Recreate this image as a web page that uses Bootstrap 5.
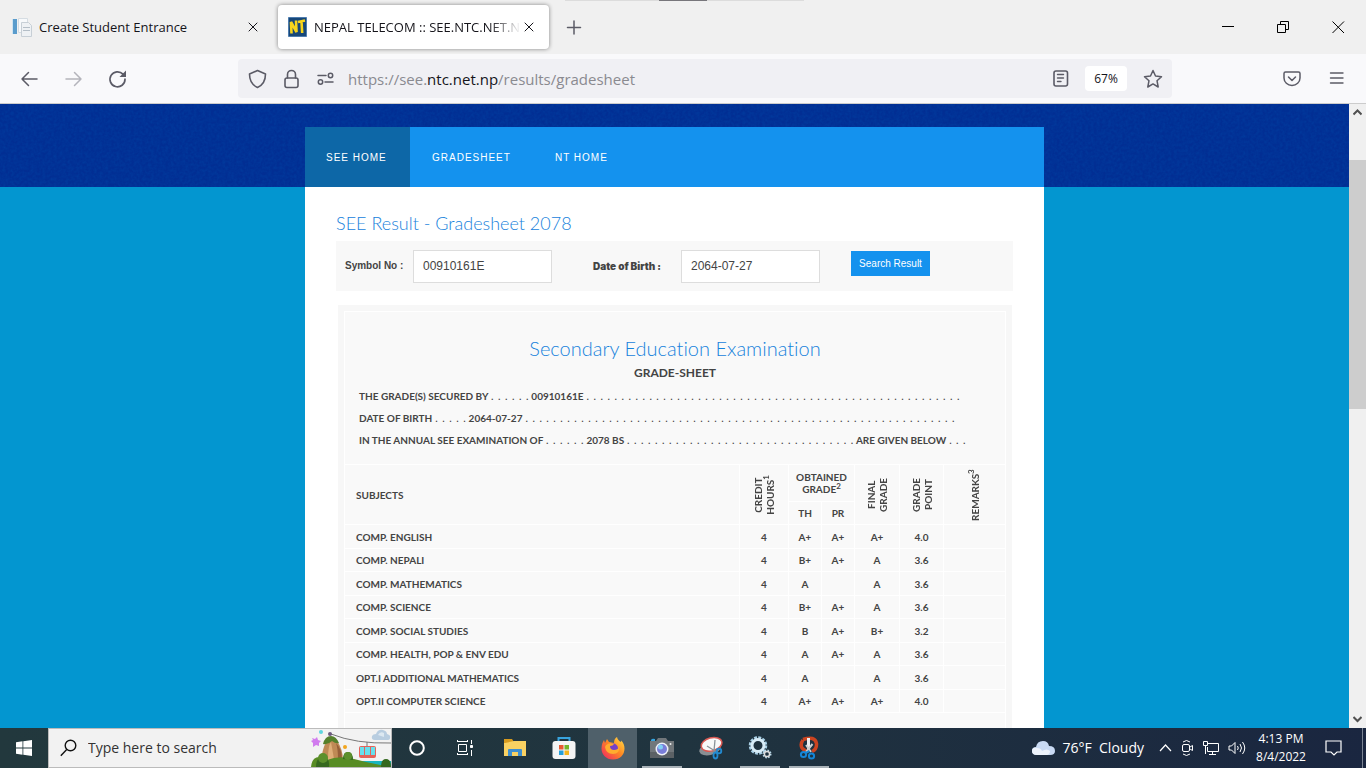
<!DOCTYPE html>
<html lang="en">
<head>
<meta charset="utf-8">
<meta name="viewport" content="width=device-width, initial-scale=1">
<title>NEPAL TELECOM :: SEE.NTC.NET.NP</title>
<link href="https://cdn.jsdelivr.net/npm/bootstrap@5.3.0/dist/css/bootstrap.min.css" rel="stylesheet">
<style>
  body { font-family: "Open Sans", "Noto Sans", sans-serif; font-size: 14px; line-height: 20px; color: #15141a; }
  button { border: 0; background: none; padding: 0; color: inherit; }
  svg { display: block; flex: none; }
  .ln { fill: none; stroke: currentColor; stroke-linecap: round; stroke-linejoin: round; }

  /* browser window */
  .tabstrip { height: 54px; background: #f0f0f0; }
  .pulltab { top: 0; left: 565px; width: 239px; height: 1px; background: #dcdcdc; }
  .pulltab::after { content: ""; position: absolute; left: 94px; width: 48px; height: 1px; background: #77767b; }
  .tab { height: 44px; border-radius: 4px; }
  .tab-one { width: 266px; padding: 0 8px 0 12px; gap: 7px; }
  .tab-two { width: 271px; margin-left: 12px; padding: 0 15px 0 10px; background: #fff; box-shadow: 0 0 4px rgba(0,0,0,.45); gap: 7px; }
  .tab-two button { margin-left: -4px; }
  .tab-label { font-size: 13px; }
  .tab-two .tab-label { -webkit-mask-image: linear-gradient(90deg, #000 85%, transparent); mask-image: linear-gradient(90deg, #000 85%, transparent); }
  .winctl { width: 55px; }
  .toolbar { height: 50px; background: #f9f9fb; border-bottom: 1px solid #ccc; color: #5b5b66; }
  .navbtns { width: 238px; padding-left: 20px; gap: 24px; }
  .urlbar { height: 39px; background: #f0f0f4; border-radius: 4px; padding: 0 9px 0 10px; }
  .address { font-size: 15px; color: #8a8a90; border: 0; background: none; }
  .address b { font-weight: 400; color: #15141a; }
  .zoomlvl { width: 42px; height: 25px; background: #fff; border-radius: 4px; font-size: 12px; color: #15141a; }
  .menus { width: 194px; padding-right: 21px; gap: 28px; }

  /* web page */
  .viewport { background: #0396d0; }
  .hero { height: 83px; background: #022e93; }
  .hero svg { inset: 0; opacity: .15; }
  .sitewrap { width: 739px; max-width: 100%; margin-top: -60px; background: #fff; }
  .sitenav { background: #1492ee; }
  .sitenav a { height: 60px; padding: 1px 22px 0; color: #fff; text-decoration: none; font: 10px/60px "Liberation Sans", Arial, sans-serif; letter-spacing: 1px; }
  .sitenav a.current { background: #0d67a7; width: 105px; padding-left: 21px; }
  .sitebody { padding: 24px 31px 0; font-family: "Liberation Sans", Arial, sans-serif; }
  .headline { font: 300 18px/24px Lato, sans-serif; font-variant-ligatures: none; color: #1782dc; margin: 0; }
  .searchrow { height: 50px; margin-top: 6px; padding: 0 9px; background: #f8f8f8; color: #444; }
  .searchrow label { font-size: 10px; font-weight: 700; line-height: 16px; }
  .searchrow .lab-sym { width: 68px; }
  .searchrow .lab-dob { width: 88px; margin-left: 41px; font-family: Inter, sans-serif; font-weight: 900; }
  .searchrow input { width: 139px; height: 33px; padding: 0 9px; border: 1px solid #ddd; background: #fff; color: #444; font-size: 12px; }
  .searchrow button { width: 79px; height: 25px; margin: 0 0 5px 31px; background: #1492ee; color: #fff; font-size: 10px; }
  .sheet { margin: 14px 1px 0 2px; padding: 6px; background: #f7f7f7; font-family: Lato, sans-serif; color: #444; font-weight: 700; }
  .sheet-top { border: 1px solid #fff; border-bottom: 0; background: #f9f9f9; height: 153px; padding: 23px 14px 0; }
  .sheet-top h2 { font-size: 20px; line-height: 26px; }
  .subhead { font-size: 12px; line-height: 24px; }
  .sheet-top p { height: 22px; font-size: 10px; line-height: 22px; white-space: nowrap; margin: 0; }
  .dots { font: 11px/22px "DejaVu Sans", sans-serif; }
  .grades { width: 100%; table-layout: fixed; border-collapse: collapse; background: #f9f9f9; font-size: 10px; line-height: 12px; text-align: center; }
  .grades th, .grades td { border: 1px solid #fff; padding: 0; height: 24px; font-weight: 700; }
  .grades tbody tr:nth-child(even) td { height: 23px; }
  .grades .subj { text-align: left; padding-left: 11px; }
  .grades .group { height: 37px; }
  .grades .half { height: 23px; }
  .grades sup { top: 0; font-size: 8px; line-height: 0; vertical-align: super; }
  .upright { writing-mode: vertical-rl; transform: rotate(180deg); display: inline-block; vertical-align: middle; }
  .scroller { width: 17px; background: #f0f0f0; color: #505050; padding: 5px 0; }
  .thumb { height: 249px; margin-top: 44px; background: #cdcdcd; }

  /* desktop taskbar */
  .taskbar { height: 40px; background: linear-gradient(90deg, #22383d, #20343f 50%, #1a2640); color: #fff; }
  .startbtn { width: 48px; }
  .searchbox { width: 344px; height: 40px; background: #f2f2f2; border: 1px solid #bbb; color: #222; padding-left: 11px; gap: 11px; }
  .searchbox input { width: 180px; border: 0; background: none; padding: 0; font-size: 14px; color: #222; }
  .searchbox input::placeholder { color: #333; opacity: 1; }
  .app { width: 49px; height: 40px; }
  .app.active { background: #4f606a; }
  .app.open::after { content: ""; position: absolute; left: 5px; right: 4px; bottom: 0; height: 2px; background: #a9b2b8; }
  .weather { font-size: 14px; gap: 8px; margin-right: 15px; }
  .tray { gap: 9px; }
  .clock { width: 70px; font-size: 12px; line-height: 18px; }
  .notes { width: 34px; }
  .peek { width: 4px; margin-left: 12px; border-left: 1px solid #7b8493; }
</style>
</head>
<body class="vh-100 d-flex flex-column overflow-hidden">

<header class="flex-shrink-0">
  <div class="tabstrip d-flex align-items-center position-relative">
    <div class="pulltab position-absolute"></div>
    <div class="tab tab-one d-flex align-items-center">
      <svg width="20" height="20" viewBox="0 0 20 20"><path fill="#5a9ccc" d="M1 2h4v15H1z"/><path fill="#cfe4f2" d="M0 2h1v15H0z"/><path fill="#f7f9fb" stroke="#d5dce2" d="M6.500 1.500h9v14h-9z"/><path fill="#eef1f4" stroke="#c7cfd6" d="M9.500 5.500h7l3 3v11h-10z"/><path stroke="#b4bec7" d="M11 10.500h7M11 13.500h7"/></svg>
      <span class="tab-label flex-grow-1">Create Student Entrance</span>
      <button aria-label="Close tab"><svg class="ln" width="10" height="10" viewBox="0 0 10 10"><path d="M1 1l8 8M9 1l-8 8"/></svg></button>
    </div>
    <div class="tab tab-two d-flex align-items-center">
      <svg width="19" height="20" viewBox="0 0 19 20"><path fill="#174778" stroke="#4d7cae" d="M.5.5h18v19H.5z"/><path fill="none" stroke="#f8d51b" stroke-width="2.600" d="M3.500 16.500L3 5l5.500 10L8 3.500M10 5l7-1.500M13.500 4.500l.7 11.500"/></svg>
      <span class="tab-label flex-fill text-nowrap overflow-hidden">NEPAL TELECOM :: SEE.NTC.NET.NP</span>
      <button aria-label="Close tab"><svg class="ln" width="10" height="10" viewBox="0 0 10 10"><path d="M1 1l8 8M9 1l-8 8"/></svg></button>
    </div>
    <button class="ms-3" aria-label="New tab"><svg class="ln" width="18" height="18" viewBox="0 0 18 18"><path stroke="#5b5b66" stroke-width="1.500" d="M9 3v13M2.500 9.500h13"/></svg></button>
    <div class="d-flex ms-auto">
      <button class="winctl d-flex justify-content-center" aria-label="Minimize"><svg width="13" height="13"><path fill="#000" d="M0 5h12v1H0z"/></svg></button>
      <button class="winctl d-flex justify-content-center" aria-label="Restore"><svg width="13" height="13" fill="none" stroke="#000"><path d="M.5 3.500h8v8h-8zM3.500 3.500v-3h8v8h-3"/></svg></button>
      <button class="winctl d-flex justify-content-center" aria-label="Close"><svg width="13" height="13" fill="none" stroke="#000"><path d="M.5.5l11.500 11.500M12 .5L.5 12"/></svg></button>
    </div>
  </div>

  <div class="toolbar d-flex align-items-center">
    <div class="navbtns d-flex">
      <button aria-label="Back"><svg class="ln" width="20" height="20" viewBox="0 0 20 20"><path stroke-width="1.500" d="M17 10H2M8.500 3.500L2 10l6.500 6.500"/></svg></button>
      <button aria-label="Forward"><svg class="ln" width="20" height="20" viewBox="0 0 20 20"><path stroke="#b4b4bb" stroke-width="1.500" d="M2 10h15M10.500 3.500L17 10l-6.500 6.500"/></svg></button>
      <button aria-label="Reload"><svg class="ln" width="20" height="20" viewBox="0 0 20 20"><path stroke-width="1.700" d="M15 5.200a7.500 7.500 0 1 0 2 5"/><path fill="currentColor" stroke="none" d="M18 1.500v6.500h-6.500z"/></svg></button>
    </div>
    <div class="urlbar d-flex align-items-center flex-fill">
      <svg class="ln" width="19" height="20" viewBox="0 0 19 20"><path stroke-width="1.600" d="M9.500 1.500L17.500 5c0 7-2.500 11-8 13.500C4 16 1.500 12 1.500 5z"/></svg>
      <svg class="ln ms-3" width="18" height="20" viewBox="0 0 18 20"><rect x="2" y="9" width="13" height="9.500" rx="2" stroke-width="1.600"/><path stroke-width="1.600" d="M4.500 9V5.500a4 4 0 0 1 8 0V9"/></svg>
      <svg class="ln ms-3" width="19" height="16" viewBox="0 0 19 16"><path stroke-width="1.500" d="M1 4.500h8M8 11h8"/><circle cx="13.500" cy="4.500" r="2.200" stroke-width="1.500"/><circle cx="3.500" cy="11" r="2.200" stroke-width="1.500"/></svg>
      <div class="address flex-fill ms-2 ps-1">https://see.<b>ntc.net.np</b>/results/gradesheet</div>
      <button aria-label="Reader view"><svg class="ln" width="16" height="18" viewBox="0 0 16 18"><rect x="1" y="1" width="13.500" height="15" rx="2" stroke-width="1.600"/><path stroke-width="1.400" d="M4.500 4.500h6M4.500 8h6M4.500 11.500h3.500"/></svg></button>
      <button class="zoomlvl mx-3">67%</button>
      <button aria-label="Bookmark"><svg class="ln" width="20" height="20" viewBox="0 0 20 20"><path stroke-width="1.500" d="M10 1.500l2.500 5.500 6 .7-4.500 4 1.200 6.300-5.200-3.100L4.800 18 6 11.700l-4.500-4 6-.7z"/></svg></button>
    </div>
    <div class="menus d-flex justify-content-end align-items-center">
      <button aria-label="Save to Pocket"><svg class="ln" width="18" height="16" viewBox="0 0 18 16"><path stroke-width="1.500" d="M2.500 1h13q1.500 0 1.500 1.500V7a8 7.500 0 0 1-16 0V2.500Q1 1 2.500 1zM5.500 6L9 9.500 12.500 6"/></svg></button>
      <button aria-label="Menu"><svg class="ln" width="16" height="16" viewBox="0 0 16 16"><path stroke-width="1.400" d="M1.500 2h12.500M1.500 7h12.500M1.500 12h12.500"/></svg></button>
    </div>
  </div>
</header>

<div class="d-flex flex-fill overflow-hidden">
  <main class="viewport flex-fill overflow-hidden">
    <div class="hero position-relative overflow-hidden">
      <svg class="position-absolute w-100 h-100" aria-hidden="true"><filter id="grain"><feTurbulence type="fractalNoise" baseFrequency=".35" numOctaves="2" seed="4"/><feColorMatrix values="0 0 0 0 0  0 0 0 0 .2  0 0 0 0 .65  1.500 0 0 0 -.4"/></filter><rect width="100%" height="100%" filter="url(#grain)"/></svg>
    </div>
    <div class="sitewrap mx-auto position-relative">
      <nav class="sitenav d-flex">
        <a class="current" href="#home">SEE HOME</a>
        <a href="#gradesheet">GRADESHEET</a>
        <a href="#nt">NT HOME</a>
      </nav>
      <div class="sitebody">
        <h1 class="headline">SEE Result - Gradesheet 2078</h1>
        <form class="searchrow d-flex align-items-center">
          <label class="lab-sym" for="symbol">Symbol No :</label>
          <input id="symbol" type="text" value="00910161E">
          <label class="lab-dob" for="dob">Date of Birth :</label>
          <input id="dob" type="text" value="2064-07-27">
          <button type="button">Search Result</button>
        </form>

        <section class="sheet">
          <div class="sheet-top">
            <h2 class="headline text-center">Secondary Education Examination</h2>
            <div class="subhead text-center">GRADE-SHEET</div>
            <p>THE GRADE(S) SECURED BY <span class="dots">. . . . . .</span> 00910161E <span class="dots">. . . . . . . . . . . . . . . . . . . . . . . . . . . . . . . . . . . . . . . . . . . . . . . . . . . . . .</span></p>
            <p>DATE OF BIRTH <span class="dots">. . . . .</span> 2064-07-27 <span class="dots">. . . . . . . . . . . . . . . . . . . . . . . . . . . . . . . . . . . . . . . . . . . . . . . . . . . . . . . . . . . . . .</span></p>
            <p>IN THE ANNUAL SEE EXAMINATION OF <span class="dots">. . . . . .</span> 2078 BS <span class="dots">. . . . . . . . . . . . . . . . . . . . . . . . . . . . . . . . .</span> ARE GIVEN BELOW <span class="dots">. . .</span></p>
          </div>
          <table class="grades">
            <colgroup><col><col style="width:49px"><col style="width:33px"><col style="width:33px"><col style="width:45px"><col style="width:44px"><col style="width:62px"></colgroup>
            <thead>
              <tr>
                <th class="subj" rowspan="2">SUBJECTS</th>
                <th rowspan="2"><span class="upright">CREDIT<br>HOURS<sup>1</sup></span></th>
                <th class="group" colspan="2">OBTAINED<br>GRADE<sup>2</sup></th>
                <th rowspan="2"><span class="upright">FINAL<br>GRADE</span></th>
                <th rowspan="2"><span class="upright">GRADE<br>POINT</span></th>
                <th rowspan="2"><span class="upright">REMARKS<sup>3</sup></span></th>
              </tr>
              <tr><th class="half">TH</th><th class="half">PR</th></tr>
            </thead>
            <tbody>
              <tr><td class="subj">COMP. ENGLISH</td><td>4</td><td>A+</td><td>A+</td><td>A+</td><td>4.0</td><td></td></tr>
              <tr><td class="subj">COMP. NEPALI</td><td>4</td><td>B+</td><td>A+</td><td>A</td><td>3.6</td><td></td></tr>
              <tr><td class="subj">COMP. MATHEMATICS</td><td>4</td><td>A</td><td></td><td>A</td><td>3.6</td><td></td></tr>
              <tr><td class="subj">COMP. SCIENCE</td><td>4</td><td>B+</td><td>A+</td><td>A</td><td>3.6</td><td></td></tr>
              <tr><td class="subj">COMP. SOCIAL STUDIES</td><td>4</td><td>B</td><td>A+</td><td>B+</td><td>3.2</td><td></td></tr>
              <tr><td class="subj">COMP. HEALTH, POP &amp; ENV EDU</td><td>4</td><td>A</td><td>A+</td><td>A</td><td>3.6</td><td></td></tr>
              <tr><td class="subj">OPT.I ADDITIONAL MATHEMATICS</td><td>4</td><td>A</td><td></td><td>A</td><td>3.6</td><td></td></tr>
              <tr><td class="subj">OPT.II COMPUTER SCIENCE</td><td>4</td><td>A+</td><td>A+</td><td>A+</td><td>4.0</td><td></td></tr>
              <tr><td colspan="7"></td></tr>
            </tbody>
          </table>
        </section>
      </div>
    </div>
  </main>
  <div class="scroller flex-shrink-0 d-flex flex-column">
    <svg class="align-self-center" width="9" height="7" fill="none" stroke="currentColor" stroke-width="2"><path d="M.5 5.500l4-4 4 4"/></svg>
    <div class="thumb"></div>
    <svg class="align-self-center mt-auto" width="9" height="7" fill="none" stroke="currentColor" stroke-width="2"><path d="M.5 1l4 4 4-4"/></svg>
  </div>
</div>

<footer class="taskbar d-flex flex-shrink-0 align-items-center">
  <button class="startbtn d-flex justify-content-center" aria-label="Start"><svg width="16" height="16" viewBox="0 0 16 16" fill="#fff"><path d="M0 2.200L6.500 1.300v6.300H0zM7.300 1.200L16 0v7.600H7.300zM0 8.400h6.500v6.300L0 13.800zM7.300 8.400H16V16l-8.700-1.200z"/></svg></button>
  <div class="searchbox d-flex align-items-center">
    <svg width="17" height="18" viewBox="0 0 17 18" fill="none" stroke="#111" stroke-width="1.400"><circle cx="10.500" cy="6.500" r="5.300"/><path d="M6.700 10.500L.8 16.800"/></svg>
    <input type="text" placeholder="Type here to search" aria-label="Type here to search">
    <svg class="ms-auto" width="80" height="38" viewBox="0 0 80 38">
      <path fill="#19b5bf" d="M45 32h35v6H45z"/>
      <path fill="none" stroke="#777" d="M20 5q25 10 60 9M56 13v5"/>
      <path fill="#bf8a55" d="M10 30q3-17 8-20 5-2 8 2 6 8 6 20z"/><path fill="#dfae78" d="M17 30q0-13 3-17l3 17z"/><path fill="#966039" d="M27 30q0-10-2-16 6 6 6 16z"/>
      <path fill="#55802b" d="M12 15q2-8 8-8 5 0 8 7-3 1-7-2-4 4-9 3z"/>
      <circle cx="19" cy="5" r="2" fill="#6b597d"/>
      <path fill="#588c24" d="M0 38q1-10 8-10 5 0 8 3 12-5 27-1 15 4 37 8z"/><path fill="#36691f" d="M5 38q0-10 7-10t6 10zM70 38q0-8 5-8t5 8zM32 30q0-7 5-7t5 8z"/><circle cx="12" cy="29" r="5" fill="#5c902c"/><circle cx="37" cy="27" r="4" fill="#5c902c"/>
      <rect x="48" y="17" width="17" height="12" rx="2" fill="#e46359"/><path fill="#67e0ed" d="M49 18h4v8h-4zM54 18h5v8h-5zM60 18h4v8h-4z"/>
      <path fill="#b8cde0" d="M64 11q-4 0-3-4 1-2 4-2 2-5 7-4 4 1 4 4 4 1 3 4 0 2-3 2z"/><path fill="#dce8f1" d="M67 6q2-4 6-2v4z"/>
      <path fill="#d17cee" d="M1 9l3 1 2-2 1 3 3 1-2 2v3l-3-1-3 2V14l-2-2 2-1z"/><circle cx="10" cy="3" r="2" fill="#5ed5df"/><circle cx="34" cy="18" r="2" fill="#f2a61f"/>
    </svg>
  </div>
  <button class="app d-flex align-items-center justify-content-center" aria-label="Cortana"><svg width="18" height="18"><circle cx="9" cy="9" r="6.800" fill="none" stroke="#fff" stroke-width="2"/></svg></button>
  <button class="app d-flex align-items-center justify-content-center" aria-label="Task view"><svg width="20" height="18" fill="none" stroke="#fff"><path d="M2.500 5.500h8v7h-8zM1 2.500h11M1 15.500h11M1.500 1v2M11.500 1v2M1.500 14v2M11.500 14v2M15.500 1v4M15.500 11v6"/><path fill="#fff" d="M14.500 6.500h2v2h-2z"/></svg></button>
  <button class="app d-flex align-items-center justify-content-center" aria-label="File Explorer"><svg width="22" height="20" viewBox="0 0 22 20"><path fill="#d79a1e" d="M0 1h8l2 3v4H0z"/><path fill="#f9d162" d="M1 5l9-2h12v15H0V5z"/><path fill="#3e8ed0" d="M4 18v-6q0-1 1-1h12q1 0 1 1v6h-4v-4H8v4z"/></svg></button>
  <button class="app d-flex align-items-center justify-content-center" aria-label="Store"><svg width="24" height="24" viewBox="0 0 24 24"><path fill="none" stroke="#38a4de" stroke-width="2" d="M6.500 6V2h11v4"/><rect x=".5" y="5" width="23" height="18" rx="3" fill="#f4f4f4"/><path fill="#e85932" d="M7 9h4.500v4.500H7z"/><path fill="#74b62b" d="M12.500 9H17v4.500h-4.500z"/><path fill="#259fd9" d="M7 14.500h4.500V19H7z"/><path fill="#f4b51d" d="M12.500 14.500H17V19h-4.500z"/></svg></button>
  <button class="app active d-flex align-items-center justify-content-center" aria-label="Firefox"><svg width="24" height="24" viewBox="0 0 24 24"><defs><linearGradient id="ff" x1="1" x2="0" y1="0" y2="1"><stop offset="0" stop-color="#ffe34a"/><stop offset=".45" stop-color="#ff8a22"/><stop offset="1" stop-color="#ed1e68"/></linearGradient></defs><path fill="url(#ff)" d="M12 23.500C5 23.500.5 18.500.5 12.500c0-4 1.500-7 2.500-8.500l1 3 2-4 2 3 5 1c0-3 1-5 3-6 .5 2.500 2 4 4 5l.2-1.500c2.300 2 3.300 5 3.300 8 0 6.500-4.500 11-11.500 11z"/><circle cx="12" cy="12.500" r="5" fill="#7440c9"/><path fill="#ffac2e" d="M5 9q4-3 8-1-1 2-4 2 0 4 4 4 4 0 5-3 1 7-6 7t-8-7z"/></svg></button>
  <button class="app open position-relative d-flex align-items-center justify-content-center" aria-label="Camera"><svg width="24" height="22" viewBox="0 0 24 22"><path fill="#34a4e0" d="M1 3q1-2 4-1v2H1z"/><path fill="#71777b" d="M0 4h6l2-3h8l2 3h6v17H0z"/><path fill="#5b6165" d="M0 15h24v6H0z"/><circle cx="12" cy="12" r="6.500" fill="#eef1f7"/><circle cx="12" cy="12" r="5" fill="#7a7ed8"/><circle cx="10.500" cy="10" r="2.500" fill="#80cff4"/><circle cx="20.500" cy="7" r="1" fill="#eee"/></svg></button>
  <button class="app d-flex align-items-center justify-content-center" aria-label="Snipping Tool"><svg width="24" height="24" viewBox="0 0 24 24"><ellipse cx="11" cy="13" rx="11" ry="6" fill="#888f94" transform="rotate(-15 11 13)"/><ellipse cx="12.500" cy="8.500" rx="10.500" ry="6.500" fill="#f8f8f8" stroke="#d95953" stroke-width="1.500" transform="rotate(-15 12 8)"/><path stroke="#8a9298" stroke-width="1.300" d="M16 4l-1 11M8 10l8 5"/><g fill="none" stroke="#238ad0" stroke-width="1.800"><circle cx="20" cy="15" r="2.300"/><ellipse cx="16.500" cy="19.500" rx="2" ry="3"/></g></svg></button>
  <button class="app open position-relative d-flex align-items-center justify-content-center" aria-label="Services"><svg width="24" height="24" viewBox="0 0 24 24" fill="none"><circle cx="10" cy="9.500" r="7.500" stroke="#a9d0e6" stroke-width="3.500" stroke-dasharray="2.700 1.230"/><circle cx="10" cy="9.500" r="6" stroke="#d8ecf7" stroke-width="3"/><circle cx="19" cy="18" r="3.500" stroke="#b6d7e8" stroke-width="2" stroke-dasharray="1.500 1.250"/><circle cx="19" cy="18" r="2.600" stroke="#ddd" stroke-width="1.500"/></svg></button>
  <button class="app open position-relative d-flex align-items-center justify-content-center" aria-label="Snip and Sketch"><svg width="20" height="24" viewBox="0 0 20 24" fill="none"><path stroke="#cb4420" stroke-width="3.500" d="M4 3.500q12-4 13.500 4 .5 6-4.500 8M4 4q-3 4-1 8 2 2 4 3"/><path stroke="#eee" stroke-width="3" d="M9.500 2v11"/><path stroke="#ccc" stroke-width="2" d="M13.500 8L7 16M7 9l5 7"/><circle cx="4.500" cy="18.500" r="2.600" stroke="#1586d8" stroke-width="2"/><circle cx="12.500" cy="20" r="2.600" stroke="#1586d8" stroke-width="2"/><path stroke="#1586d8" stroke-width="2" d="M6.500 17l4-2"/></svg></button>

  <div class="weather d-flex align-items-center ms-auto">
    <svg width="23" height="16" viewBox="0 0 23 16"><path fill="#c9daf4" d="M5 15q-5 0-5-4 0-4 4-4 1-6 7-6 5 0 6 5 6 0 6 5 0 4-5 4z"/><path fill="#edf3fc" d="M5 15q-5 0-5-4 0-4 5-3 4 0 5 3 5-3 8 0 0 3-3 4z"/></svg>
    <span>76°F&nbsp; Cloudy</span>
  </div>
  <div class="tray d-flex align-items-center">
    <svg width="13" height="14" fill="none" stroke="#fff" stroke-width="1.200"><path d="M1 10l5.500-6L12 10"/></svg>
    <svg width="13" height="18" fill="none" stroke="#fff"><rect x="1.500" y="5.500" width="7" height="7" rx="1.500"/><path d="M9 8l2.500-1.500v5L9 10M2 3q3.500-3 7 0M2 15q3.500 3 7 0"/></svg>
    <svg width="16" height="16" fill="none" stroke="#fff"><path d="M5 3.500h10.500v8H4.500V7M9.500 12v2M6 14.500h7M.5 1.500h4v4h-4zM2.500 5v9"/></svg>
    <svg width="18" height="16" fill="none" stroke="#fff"><path d="M1 6h2.500L7 2.500v11L3.500 10H1zM9.500 6q1.500 2 0 4M12 4q3 4 0 8M14.500 2q4.500 6 0 12"/></svg>
  </div>
  <div class="clock text-center">4:13 PM<br>8/4/2022</div>
  <button class="notes d-flex justify-content-center" aria-label="Notifications"><svg width="17" height="18" fill="none" stroke="#fff" stroke-width="1.200"><path d="M1 2h15v11h-4l-3 3-3-3H1z"/></svg></button>
  <div class="peek align-self-stretch"></div>
</footer>

<script src="https://cdn.jsdelivr.net/npm/bootstrap@5.3.0/dist/js/bootstrap.bundle.min.js"></script>
</body>
</html>
